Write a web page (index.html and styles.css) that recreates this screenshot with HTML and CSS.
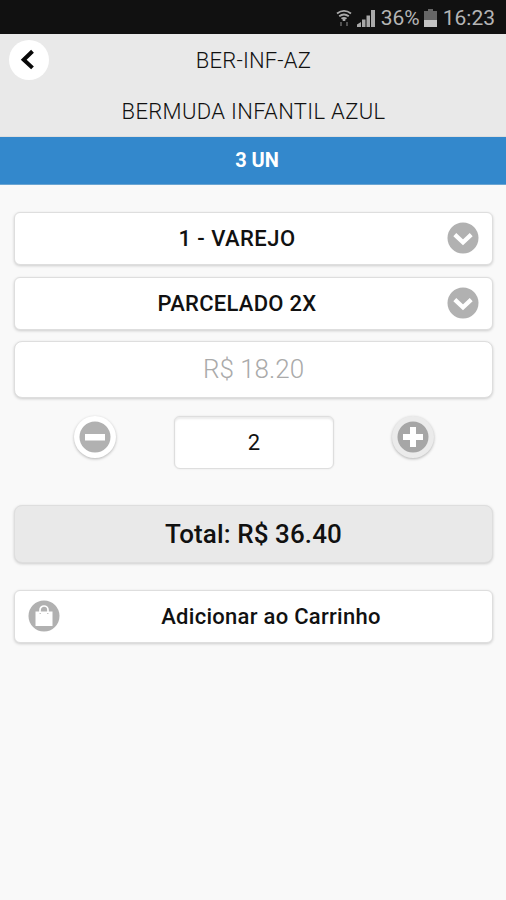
FILE: index.html
```html
<!DOCTYPE html>
<html lang="pt-BR">
<head>
<meta charset="utf-8">
<title>BER-INF-AZ</title>
<link rel="stylesheet" href="styles.css">
</head>
<body>
<div class="status">
  <svg class="wifi" width="16" height="18" viewBox="0 0 16 18" fill="none" stroke="#aaa" stroke-width="1.9"><path d="M1 4.5Q8-.8 15 4.5M3.2 7.3Q8 3.6 12.8 7.3M5.5 9.8Q8 8 10.5 9.8"/><path d="M8 9v3" stroke-width="2.6"/><path d="M5 13v4M11 13v4" stroke="#555"/></svg>
  <svg class="signal" width="19" height="18" viewBox="0 0 19 18" fill="#a9a9a9"><path d="M0 18v-2.5L4 13v5zM5 10.5h3.5V18H5zM9.5 6.5H13V18H9.5zM14 1h4v17h-4z"/></svg>
  <span class="percent">36%</span>
  <svg class="battery" width="13" height="18" viewBox="0 0 13 18"><path fill="#666" d="M4 0h5v2h4v9H0V2h4z"/><path fill="#c4c4c4" d="M0 11h13v7H0z"/></svg>
  <span class="clock">16:23</span>
</div>
<header class="header">
  <button class="back" aria-label="Voltar"><svg width="40" height="40" viewBox="0 0 40 40" fill="none" stroke="#080808" stroke-width="4"><path d="M23.5 11.2 14.7 19.7l8.800 8.200"/></svg></button>
  <h1 class="code">BER-INF-AZ</h1>
  <p class="name">BERMUDA INFANTIL AZUL</p>
</header>
<div class="stock"><span>3 UN</span></div>
<main class="form">
  <button class="field select table"><span>1 - VAREJO</span><svg width="32" height="32" viewBox="0 0 32 32"><circle cx="16" cy="16" r="15.5" fill="#b1b1b1"/><path d="m7.800 12.700 8.200 7.600 8.200-7.600" fill="none" stroke="#fff" stroke-width="4.300"/></svg></button>
  <button class="field select terms"><span>PARCELADO 2X</span><svg width="32" height="32" viewBox="0 0 32 32"><circle cx="16" cy="16" r="15.5" fill="#b1b1b1"/><path d="m7.800 12.700 8.200 7.600 8.200-7.600" fill="none" stroke="#fff" stroke-width="4.300"/></svg></button>
  <div class="field price"><span>R$ 18.20</span></div>
  <div class="quantity">
    <button class="round" aria-label="Diminuir"><svg width="32" height="32" viewBox="0 0 32 32"><circle cx="16" cy="16" r="15.5" fill="#b1b1b1"/><path d="M6 13h20v6.500H6z" fill="#fff"/></svg></button>
    <div class="count"><span>2</span></div>
    <button class="round pressed" aria-label="Aumentar"><svg width="32" height="32" viewBox="0 0 32 32"><circle cx="16" cy="16" r="15.5" fill="#a6a6a6"/><path d="M13 6h6v7h7v6h-7v7h-6v-7H6v-6h7z" fill="#fff"/></svg></button>
  </div>
  <div class="field total"><span>Total: R$ 36.40</span></div>
  <button class="field add"><svg width="32" height="32" viewBox="0 0 32 32"><circle cx="16" cy="16" r="15.5" fill="#b1b1b1"/><path d="M7.500 11.500h17V26h-17z" fill="#fff"/><path d="M12 13v-3a4 4 0 0 1 8 0v3" fill="none" stroke="#fff" stroke-width="1.700"/><path d="M11.500 13.500H13M19 13.500h1.500" stroke="#c8c8c8"/></svg><span>Adicionar ao Carrinho</span></button>
</main>
</body>
</html>
```

FILE: styles.css
```css
* { box-sizing: border-box; }
body {
  margin: 0;
  min-height: 900px;
  background: #f9f9f9;
  color: #111;
  font-family: Roboto, "Liberation Sans", sans-serif;
}
button { font: inherit; color: inherit; padding: 0; border: 0; }
svg { display: block; flex: none; }
.status {
  height: 34px;
  background: #111;
  color: #b5b5b5;
  display: flex;
  align-items: center;
  justify-content: flex-end;
  padding: 1px 11px 0 0;
  font-size: 21px;
  white-space: nowrap;
}
.wifi { margin-right: 5px; }
.signal { margin-right: 5px; }
.battery { margin: 0 6px 0 4px; }
.header {
  position: relative;
  height: 103px;
  background: #e9e9e9;
  border-bottom: 1px solid #dedede;
  text-align: center;
}
.back {
  position: absolute;
  left: 9px;
  top: 6px;
  width: 40px;
  height: 40px;
  border-radius: 50%;
  background: #fff;
}
.code, .name {
  margin: 0;
  font-size: 22px;
  font-weight: 300;
  line-height: 51px;
}
.code { padding: 1px 0 0 1px; letter-spacing: .2px; }
.name { padding-left: 1px; letter-spacing: .33px; }
.stock {
  height: 48px;
  background: #3388cc;
  border-bottom: 1px solid #6ba5d2;
  padding-left: 8px;
  color: #fff;
  font-weight: 700;
  font-size: 20px;
  line-height: 46px;
  text-align: center;
}
.form {
  display: flex;
  flex-direction: column;
  padding: 27px 13px 0 14px;
}
.field {
  display: flex;
  align-items: center;
  justify-content: center;
  height: 53px;
  border: 1px solid #dedede;
  border-radius: 6px;
  background: #fff;
  box-shadow: 0 1px 3px rgba(0, 0, 0, .18);
  white-space: nowrap;
}
.field span { flex: 1; text-align: center; }
.select, .add { font-size: 22px; font-weight: 500; }
.select { padding: 0 13px 1px 12px; }
.table { margin-bottom: 12px; letter-spacing: .45px; }
.terms { margin-bottom: 11px; letter-spacing: .27px; }
.price {
  height: 57px;
  border-radius: 8px;
  padding-bottom: 2px;
  font-size: 26px;
  font-weight: 300;
  color: #aaa;
}
.quantity {
  display: flex;
  justify-content: space-between;
  margin-top: 18px;
  padding: 0 59px 0 60px;
}
.round {
  display: grid;
  place-items: center;
  width: 42px;
  height: 42px;
  border-radius: 50%;
  background: #fff;
  box-shadow: 0 1px 3px rgba(0, 0, 0, .28);
}
.pressed { background: #ebebeb; }
.count {
  display: grid;
  place-items: center;
  width: 160px;
  height: 53px;
  border: 1px solid #dedede;
  border-radius: 6px;
  background: #fff;
  box-shadow: inset 0 2px 2px rgba(0, 0, 0, .08), 0 0 2px rgba(0, 0, 0, .1);
  font-size: 22px;
}
.total {
  height: 58px;
  margin: 36px 0 27px;
  border-radius: 8px;
  background: #e9e9e9;
  font-size: 26px;
  font-weight: 500;
  letter-spacing: .1px;
}
.add { padding: 0 10px 1px 13px; letter-spacing: .28px; }
```
